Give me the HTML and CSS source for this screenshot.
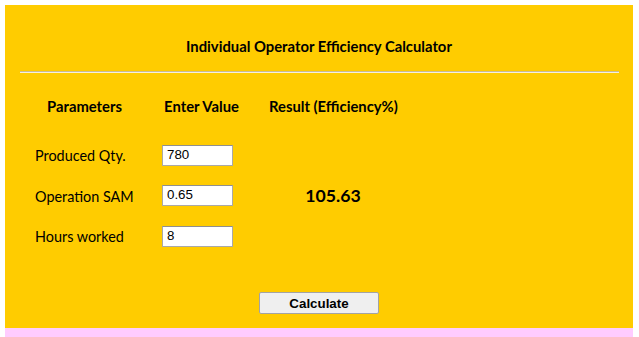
FILE: index.html
```html
<!DOCTYPE html>
<html>
<head>
<meta charset="utf-8">
<link rel="stylesheet" href="styles.css">
</head>
<body>
<div class="panel">
  <h1 class="title">Individual Operator Efficiency Calculator</h1>
  <div class="rule"></div>
  <div class="grid">
    <div class="head">Parameters</div>
    <div class="head">Enter Value</div>
    <div class="head">Result (Efficiency%)</div>
    <div class="label">Produced Qty.</div>
    <div class="cell"><input class="field" type="text" value="780"></div>
    <div class="result">105.63</div>
    <div class="label">Operation SAM</div>
    <div class="cell"><input class="field" type="text" value="0.65"></div>
    <div class="label">Hours worked</div>
    <div class="cell"><input class="field" type="text" value="8"></div>
  </div>
  <div class="actions"><button class="btn" type="button">Calculate</button></div>
</div>
<div class="footer"></div>
</body>
</html>
```
FILE: styles.css
```css
html, body {
  margin: 0;
  padding: 0;
  background: #ffffff;
}
body {
  padding: 5px 6px 0 5px;
  font-family: Lato, "Open Sans", sans-serif;
  color: #000;
}
.panel {
  background: #ffcc00;
  height: 323px;
  padding-top: 1px;
  box-sizing: border-box;
}
.title {
  margin: 31px 0 0 0;
  height: 18px;
  line-height: 18px;
  font-size: 14.8px;
  font-weight: 700;
  text-align: center;
}
.rule {
  margin: 16px 14px 0 15px;
  height: 0;
  border-top: 1px solid #c9bb95;
  border-bottom: 1px solid #f6efe0;
}
.grid {
  display: grid;
  grid-template-columns: 99px 79px 128px;
  grid-template-rows: 41px 40px 41px 40px;
  column-gap: 28px;
  margin: 21px 0 0 30px;
  align-items: center;
}
.head {
  font-size: 14.8px;
  font-weight: 700;
  text-align: center;
  line-height: 24px;
  align-self: start;
  white-space: nowrap;
}
.label {
  font-size: 14.4px;
  line-height: 18px;
  padding-top: 2px;
  white-space: nowrap;
}
.cell {
  display: flex;
}
.field {
  box-sizing: border-box;
  width: 71px;
  height: 21px;
  margin: 0;
  padding: 0 3px 2px 4px;
  border: 1px solid #a9a9a9;
  border-top-color: #8f8f8f;
  background: #fff;
  font-family: Arial, "Liberation Sans", sans-serif;
  font-size: 13.33px;
  color: #000;
}
.result {
  grid-column: 3;
  grid-row: 2 / span 3;
  text-align: center;
  font-size: 17.7px;
  font-weight: 700;
}
.actions {
  display: flex;
  justify-content: center;
  margin-top: 36px;
}
.btn {
  box-sizing: border-box;
  width: 120px;
  height: 22px;
  margin: 0;
  padding: 0;
  background: #efefef;
  border: 1px solid #a3a3a3;
  border-radius: 2px;
  font-family: Arial, "Liberation Sans", sans-serif;
  font-size: 13.33px;
  font-weight: 700;
  color: #000;
}
.footer {
  height: 20px;
  background: #ffccff;
}
```
